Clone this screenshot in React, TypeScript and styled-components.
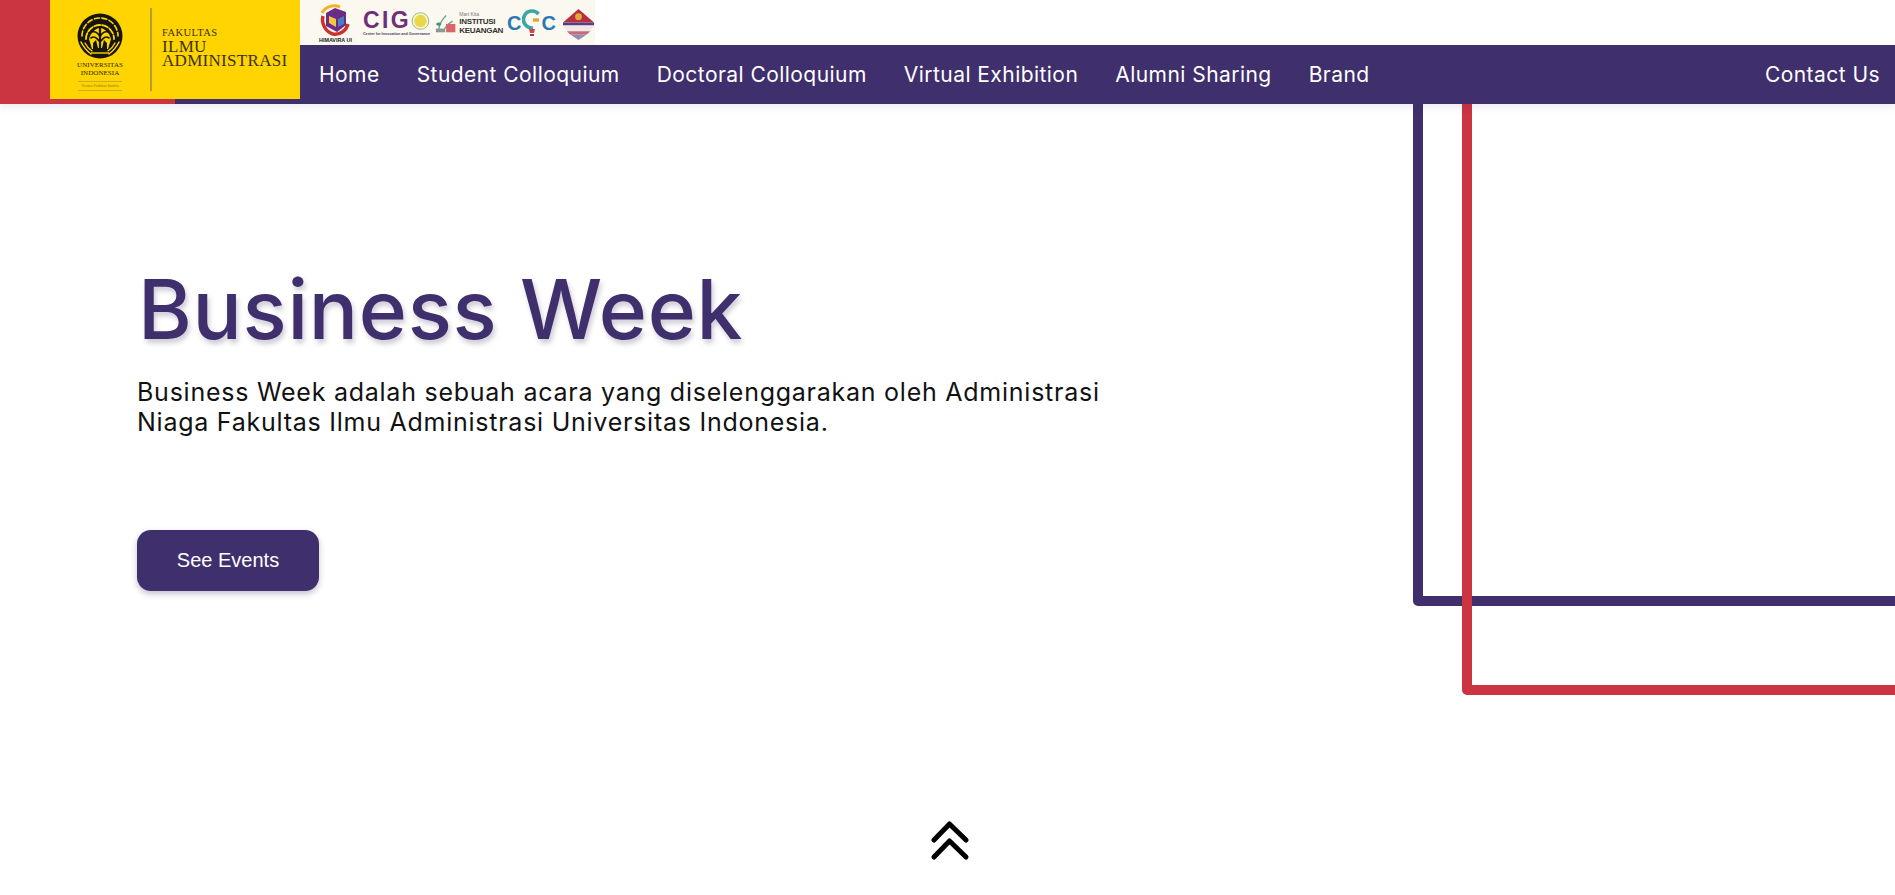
import styled, { createGlobalStyle } from 'styled-components';

const purple = '#3f2f6c';
const red = '#cb3441';
const yellow = '#ffd400';
const sans = 'Inter, "Noto Sans", "Liberation Sans", sans-serif';

const GlobalStyle = createGlobalStyle`
  html, body {
    margin: 0;
    padding: 0;
    background: #fff;
    font-family: ${sans};
    overflow: hidden;
  }
  * { box-sizing: border-box; }
`;

const Page = styled.div`
  position: relative;
  height: 895px;
  overflow: hidden;
  display: flex;
  flex-direction: column;
`;

const Header = styled.header`
  position: relative;
  z-index: 2;
  display: flex;
  height: 104px;
  flex: none;
  background: #fff;
  box-shadow: 0 3px 8px rgba(60, 50, 90, 0.1);
`;

const RedEdge = styled.div`
  width: 50px;
  background: ${red};
`;

const Brand = styled.div`
  width: 250px;
  display: flex;
  flex-direction: column;
`;

const BrandPlate = styled.div`
  height: 99px;
  background: ${yellow};
  display: flex;
  align-items: center;
`;

const BrandStrip = styled.div`
  height: 5px;
  background: linear-gradient(90deg, ${red} 50%, ${purple} 50%);
`;

const Seal = styled.div`
  width: 100px;
  display: flex;
  flex-direction: column;
  align-items: center;
  color: #2a2408;
  font-family: "Liberation Serif", serif;
  padding-top: 3px;
`;

const SealLine = styled.span`
  font-size: 7px;
  line-height: 8.5px;
  letter-spacing: 0.05px;
  white-space: nowrap;
`;

const Motto = styled.span`
  margin-top: 3px;
  padding: 1px 0;
  width: 44px;
  text-align: center;
  font-size: 4px;
  line-height: 6px;
  white-space: nowrap;
  color: #8c7a20;
  border-top: 1px solid #c9ae20;
  border-bottom: 1px solid #c9ae20;
`;

const Divider = styled.div`
  width: 2px;
  height: 83px;
  background: #b49c3a;
`;

const Faculty = styled.div`
  margin-left: 10px;
  padding-bottom: 6px;
  display: flex;
  flex-direction: column;
  color: #3a3210;
  font-family: "Liberation Serif", serif;
`;

const FacultySmall = styled.span`
  font-size: 10.5px;
  line-height: 14px;
  letter-spacing: 0.4px;
`;

const FacultyLarge = styled.span`
  font-size: 17px;
  line-height: 14px;
  letter-spacing: 0.3px;
  white-space: nowrap;
`;

const Right = styled.div`
  flex: 1;
  display: flex;
  flex-direction: column;
  min-width: 0;
`;

const LogoRow = styled.div`
  height: 45px;
  width: 295px;
  padding: 3px 0 2px 19px;
  display: flex;
  align-items: center;
  background: #fbf8ef;
`;

const Himavira = styled.div`
  width: 34px;
  display: flex;
  flex-direction: column;
  align-items: center;
  margin-right: 11px;
`;

const TinyBold = styled.span`
  font-family: "Liberation Sans", sans-serif;
  font-size: 5.4px;
  line-height: 6px;
  font-weight: 700;
  color: #222;
  white-space: nowrap;
`;

const Cigo = styled.div`
  display: flex;
  flex-direction: column;
  width: 67px;
  margin-right: 4px;
`;

const CigoRow = styled.div`
  display: flex;
  align-items: center;
  justify-content: space-between;
`;

const CigoWord = styled.span`
  font-family: "Liberation Sans", sans-serif;
  font-size: 23px;
  line-height: 23px;
  font-weight: 700;
  letter-spacing: 2.4px;
  color: #6d2f78;
`;

const CigoCaption = styled.span`
  font-family: "Liberation Sans", sans-serif;
  font-size: 3.7px;
  line-height: 5px;
  font-weight: 700;
  color: #4a3a63;
  white-space: nowrap;
`;

const Institusi = styled.div`
  display: flex;
  flex-direction: column;
  margin: 0 4px 0 3px;
  color: #333;
  font-family: "Liberation Sans", sans-serif;
`;

const InstSmall = styled.span`
  font-size: 5px;
  line-height: 6px;
  color: #777;
`;

const InstLarge = styled.span`
  font-size: 8px;
  line-height: 9.5px;
  font-weight: 700;
  letter-spacing: -0.3px;
`;

const Cgc = styled.div`
  display: flex;
  align-items: center;
  margin-right: 6px;
  font-family: "Liberation Sans", sans-serif;
  font-size: 20px;
  line-height: 22px;
  font-weight: 700;
  color: #2b77b8;
`;

const ShieldWrap = styled.div`
  margin-top: 3px;
  display: flex;
`;

const Nav = styled.nav`
  height: 59px;
  background: ${purple};
  display: flex;
  align-items: center;
  padding: 0 15px 0 19px;
  gap: 37px;
`;

const NavLink = styled.a<{ $push?: boolean }>`
  color: #fff;
  font-size: 21px;
  font-weight: 400;
  white-space: nowrap;
  letter-spacing: 0.45px;
  margin-left: ${(p) => (p.$push ? 'auto' : '0')};
`;

const Hero = styled.main`
  flex: 1;
  padding: 156px 0 0 137px;
  display: flex;
  flex-direction: column;
  align-items: flex-start;
`;

const Title = styled.h1`
  margin: 0 0 0 1px;
  color: ${purple};
  font-size: 82px;
  line-height: 100px;
  font-weight: 500;
  letter-spacing: 0.7px;
  text-shadow: 2px 4px 5px rgba(60, 50, 90, 0.25);
`;

const Lead = styled.p`
  margin: 17px 0 0;
  width: 1100px;
  color: #111;
  font-size: 25px;
  line-height: 30px;
  font-weight: 400;
  letter-spacing: 0.75px;
`;

const Cta = styled.button`
  margin-top: 93px;
  width: 182px;
  height: 61px;
  border: 0;
  border-radius: 14px;
  background: ${purple};
  color: #fff;
  font-family: "Liberation Sans", sans-serif;
  font-size: 20px;
  box-shadow: 0 3px 6px rgba(60, 50, 90, 0.3);
`;

const Frame = styled.div<{ $left: number; $bottom: number; $color: string }>`
  position: absolute;
  z-index: 1;
  top: 60px;
  left: ${(p) => p.$left}px;
  right: -20px;
  height: ${(p) => p.$bottom - 60}px;
  border: 10px solid ${(p) => p.$color};
  border-radius: 5px;
`;

const ScrollUp = styled.svg`
  position: absolute;
  left: 930px;
  top: 821px;
  width: 40px;
  height: 40px;
`;

function Crest() {
  return (
    <svg width="46" height="49" viewBox="0 0 46 49">
      <circle cx="23" cy="24" r="22.5" fill="#17150a" />
      <g fill="none" stroke={yellow} strokeLinecap="round">
        <path d="M5 24a18 18 0 0 1 36 0" strokeWidth="1.6" strokeDasharray="5 2.5" />
        <path d="M9 27a14 14 0 0 1 28 0" strokeWidth="1.8" strokeDasharray="6 2" />
        <path d="M4 30c3 6 6 9 10 12M42 30c-3 6-6 9-10 12" strokeWidth="1.5" />
        <path d="M8 31c2 4 4 6 7 8M38 31c-2 4-4 6-7 8" strokeWidth="1.3" />
      </g>
      <path d="M12 27c2-7 7-11 11-11s9 4 11 11l-3 10H15z" fill={yellow} />
      <g fill="none" stroke="#17150a" strokeLinecap="round">
        <path d="M23 15v22" strokeWidth="2.2" />
        <path d="M23 25c-2-5-5-6-9-5M23 25c2-5 5-6 9-5" strokeWidth="1.6" />
        <path d="M22 29c-3-4-5-5-8-3M24 29c3-4 5-5 8-3" strokeWidth="1.6" />
      </g>
      <path d="M16 31l3-3 2 8h4l2-8 3 3v7H16z" fill="#17150a" />
      <path d="M14 41h18" stroke={yellow} strokeWidth="1.4" />
    </svg>
  );
}

function HimaMark() {
  return (
    <svg width="32" height="33" viewBox="0 0 32 33">
      <path d="M4 12C2 20 7 28 14 30c7 1 13-3 15-10" fill="none" stroke="#c8322f" strokeWidth="3.5" />
      <path d="M3 9C6 3 14 0 21 3" fill="none" stroke="#f0b323" strokeWidth="3" />
      <path d="M7 9l9-5 11 4v13l-9 7-11-6z" fill="#6a2c86" />
      <path d="M10 12l7 3v8l-7-4z" fill="#f4c542" />
      <path d="M19 15l6-3v8l-6 3z" fill="#4a7cc0" />
    </svg>
  );
}

function SunMark() {
  return (
    <svg width="20" height="20" viewBox="0 0 20 20">
      <circle cx="10" cy="10" r="8.8" fill="#fff6c0" stroke="#8db4a0" strokeWidth="1" />
      <circle cx="10" cy="10" r="6.5" fill="#e9d64a" />
    </svg>
  );
}

function PlantMark() {
  return (
    <svg width="24" height="26" viewBox="0 0 24 26">
      <path d="M5 22c0-7 3-12 8-17M10 22c2-5 5-8 10-11" fill="none" stroke="#6aa58a" strokeWidth="1.4" />
      <path d="M2 14c2-2 5-2 6 0-1 2-4 3-6 0z" fill="#4f8f78" />
      <rect x="13" y="14" width="10" height="9" fill="#d9656c" />
      <rect x="2" y="19" width="10" height="4" fill="#8a9a90" />
    </svg>
  );
}

function BulbMark() {
  return (
    <svg width="20" height="28" viewBox="0 0 20 28">
      <path d="M16.5 5A8.5 8.5 0 1 0 10 19h1" fill="none" stroke="#39a7a5" strokeWidth="3.6" />
      <path d="M17 11h-6" stroke="#e0a030" strokeWidth="3.2" />
      <path d="M7 20h6l-1 4h-4z" fill="#d6414f" />
      <rect x="8" y="25" width="4" height="2" fill="#a5334a" />
    </svg>
  );
}

function ShieldMark() {
  return (
    <svg width="33" height="33" viewBox="0 0 34 34">
      <path d="M17 1 33 15H1z" fill="#b8303f" />
      <rect x="1" y="15" width="32" height="3" fill="#53407e" />
      <path d="M1 18h32l-4 6H5z" fill="#efe8e4" />
      <path d="M5 24h24l-3 3H8z" fill="#c96a78" />
      <path d="M8 27h18l-9 6z" fill="#9a8ab0" />
      <circle cx="17" cy="9" r="3.5" fill="#e2a63a" />
    </svg>
  );
}

export default function App() {
  return (
    <Page>
      <GlobalStyle />
      <Header>
        <RedEdge />
        <Brand>
          <BrandPlate>
            <Seal>
              <Crest />
              <SealLine>UNIVERSITAS</SealLine>
              <SealLine>INDONESIA</SealLine>
              <Motto>Veritas Probitas Iustitia</Motto>
            </Seal>
            <Divider />
            <Faculty>
              <FacultySmall>FAKULTAS</FacultySmall>
              <FacultyLarge>
                ILMU
                <br />
                ADMINISTRASI
              </FacultyLarge>
            </Faculty>
          </BrandPlate>
          <BrandStrip />
        </Brand>
        <Right>
          <LogoRow>
            <Himavira>
              <HimaMark />
              <TinyBold>HIMAVIRA UI</TinyBold>
            </Himavira>
            <Cigo>
              <CigoRow>
                <CigoWord>CIG</CigoWord>
                <SunMark />
              </CigoRow>
              <CigoCaption>Center for Innovation and Governance</CigoCaption>
            </Cigo>
            <PlantMark />
            <Institusi>
              <InstSmall>Mari Kita</InstSmall>
              <InstLarge>INSTITUSI</InstLarge>
              <InstLarge>KEUANGAN</InstLarge>
            </Institusi>
            <Cgc>
              C<BulbMark />C
            </Cgc>
            <ShieldWrap>
              <ShieldMark />
            </ShieldWrap>
          </LogoRow>
          <Nav>
            <NavLink>Home</NavLink>
            <NavLink>Student Colloquium</NavLink>
            <NavLink>Doctoral Colloquium</NavLink>
            <NavLink>Virtual Exhibition</NavLink>
            <NavLink>Alumni Sharing</NavLink>
            <NavLink>Brand</NavLink>
            <NavLink $push>Contact Us</NavLink>
          </Nav>
        </Right>
      </Header>
      <Frame $left={1413} $bottom={606} $color={purple} />
      <Frame $left={1462} $bottom={695} $color={red} />
      <Hero>
        <Title>Business Week</Title>
        <Lead>
          Business Week adalah sebuah acara yang diselenggarakan oleh Administrasi
          <br />
          Niaga Fakultas Ilmu Administrasi Universitas Indonesia.
        </Lead>
        <Cta>See Events</Cta>
      </Hero>
      <ScrollUp viewBox="0 0 40 40" fill="none" stroke="#000" strokeWidth="5" strokeLinecap="round" strokeLinejoin="round">
        <path d="M4 19 19.5 3 36 19" />
        <path d="M4 36 19.5 20 36 36" />
      </ScrollUp>
    </Page>
  );
}
